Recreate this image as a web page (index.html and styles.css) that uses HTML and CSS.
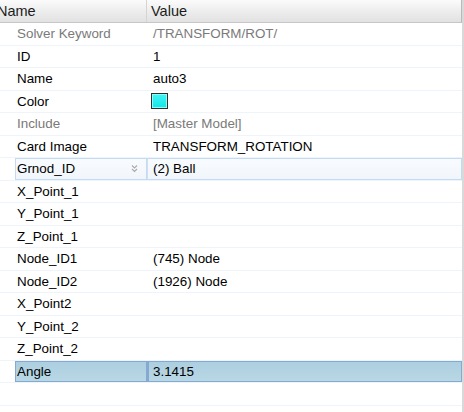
FILE: index.html
```html
<!DOCTYPE html>
<html>
<head>
<meta charset="utf-8">
<link rel="stylesheet" href="styles.css">
</head>
<body>
<div class="grid">
  <div class="header">
    <div class="hcell hname">Name</div>
    <div class="hcell hvalue">Value</div>
  </div>
  <div class="row"><div class="indent"></div><div class="cell name muted">Solver Keyword</div><div class="cell value muted">/TRANSFORM/ROT/</div></div>
  <div class="row"><div class="indent"></div><div class="cell name">ID</div><div class="cell value">1</div></div>
  <div class="row"><div class="indent"></div><div class="cell name">Name</div><div class="cell value">auto3</div></div>
  <div class="row"><div class="indent"></div><div class="cell name">Color</div><div class="cell value"><span class="swatch"></span></div></div>
  <div class="row"><div class="indent"></div><div class="cell name muted">Include</div><div class="cell value muted">[Master Model]</div></div>
  <div class="row"><div class="indent"></div><div class="cell name">Card Image</div><div class="cell value">TRANSFORM_ROTATION</div></div>
  <div class="row focus"><div class="indent"></div><div class="cell name">Grnod_ID<svg class="dd" width="7" height="9" viewBox="0 0 7 9"><path d="M1 1.5 L3.5 4 L6 1.5 M1 5 L3.5 7.5 L6 5" fill="none" stroke="#a9a9a9" stroke-width="1.1"/></svg></div><div class="cell value">(2) Ball</div></div>
  <div class="row"><div class="indent"></div><div class="cell name">X_Point_1</div><div class="cell value"></div></div>
  <div class="row"><div class="indent"></div><div class="cell name">Y_Point_1</div><div class="cell value"></div></div>
  <div class="row"><div class="indent"></div><div class="cell name">Z_Point_1</div><div class="cell value"></div></div>
  <div class="row"><div class="indent"></div><div class="cell name">Node_ID1</div><div class="cell value">(745) Node</div></div>
  <div class="row"><div class="indent"></div><div class="cell name">Node_ID2</div><div class="cell value">(1926) Node</div></div>
  <div class="row"><div class="indent"></div><div class="cell name">X_Point2</div><div class="cell value"></div></div>
  <div class="row"><div class="indent"></div><div class="cell name">Y_Point_2</div><div class="cell value"></div></div>
  <div class="row"><div class="indent"></div><div class="cell name">Z_Point_2</div><div class="cell value"></div></div>
  <div class="row selected"><div class="indent"></div><div class="cell name">Angle</div><div class="cell value">3.1415</div></div>
  <div class="row"><div class="indent"></div><div class="cell name"></div><div class="cell value"></div></div>
</div>
</body>
</html>
```
FILE: styles.css
```css
html, body {
  margin: 0;
  padding: 0;
  background: #ffffff;
}
body {
  font-family: "Liberation Sans", Arial, sans-serif;
  font-size: 13.4px;
  color: #000;
  width: 464px;
  height: 412px;
  overflow: hidden;
}
.grid {
  width: 462px;
  height: 412px;
  border-right: 2px solid #d9d9d9;
  display: flex;
  flex-direction: column;
  overflow: hidden;
}
.header {
  display: grid;
  grid-template-columns: 147px 1fr;
  height: 23px;
  flex: none;
  box-sizing: border-box;
  border-bottom: 1px solid #c6c6c6;
  border-right: 1px solid #b9b9b9;
  background: linear-gradient(#fbfbfb, #ececec 55%, #e2e2e2);
}
.hcell {
  display: flex;
  align-items: center;
  white-space: nowrap;
  overflow: hidden;
  color: #1c1c1c;
  font-size: 14.5px;
}
.hname {
  border-right: 1px solid #d4d4d4;
  margin-left: -3px;
  padding-left: 0;
}
.hvalue {
  padding-left: 4px;
}
.row {
  display: grid;
  grid-template-columns: 15px 132px 1fr;
  height: 22.5px;
  flex: none;
  box-sizing: border-box;
  border-bottom: 1px solid #edf4fb;
}
.cell {
  display: flex;
  align-items: center;
  white-space: nowrap;
  overflow: hidden;
  box-sizing: border-box;
}
.name {
  padding-left: 2px;
}
.value {
  padding-left: 6px;
}
.muted {
  color: #7a7a7a;
}
.swatch {
  display: block;
  width: 15px;
  height: 14px;
  margin-left: -2px;
  border: 1px solid #2e2e2e;
  background: linear-gradient(#3ff5f5, #12e6ea);
  box-shadow: inset 0 0 0 1px #8ffafa;
}
.focus .cell {
  border: 1px solid #c3daf1;
  background: linear-gradient(#f8fbfe, #f1f6fc);
}
.focus .name {
  padding-left: 1px;
  justify-content: space-between;
  padding-right: 8px;
}
.focus .value {
  border-left: 1px solid #cfe0f3;
  padding-left: 5px;
}
.dd {
  display: block;
}
.selected .cell {
  border: 1px solid #86a9d4;
  background: linear-gradient(#accfe0, #b9d7e4);
}
.selected .name {
  padding-left: 1px;
}
.selected .value {
  border-left: 2px solid #86a9d4;
  padding-left: 4px;
}
```
